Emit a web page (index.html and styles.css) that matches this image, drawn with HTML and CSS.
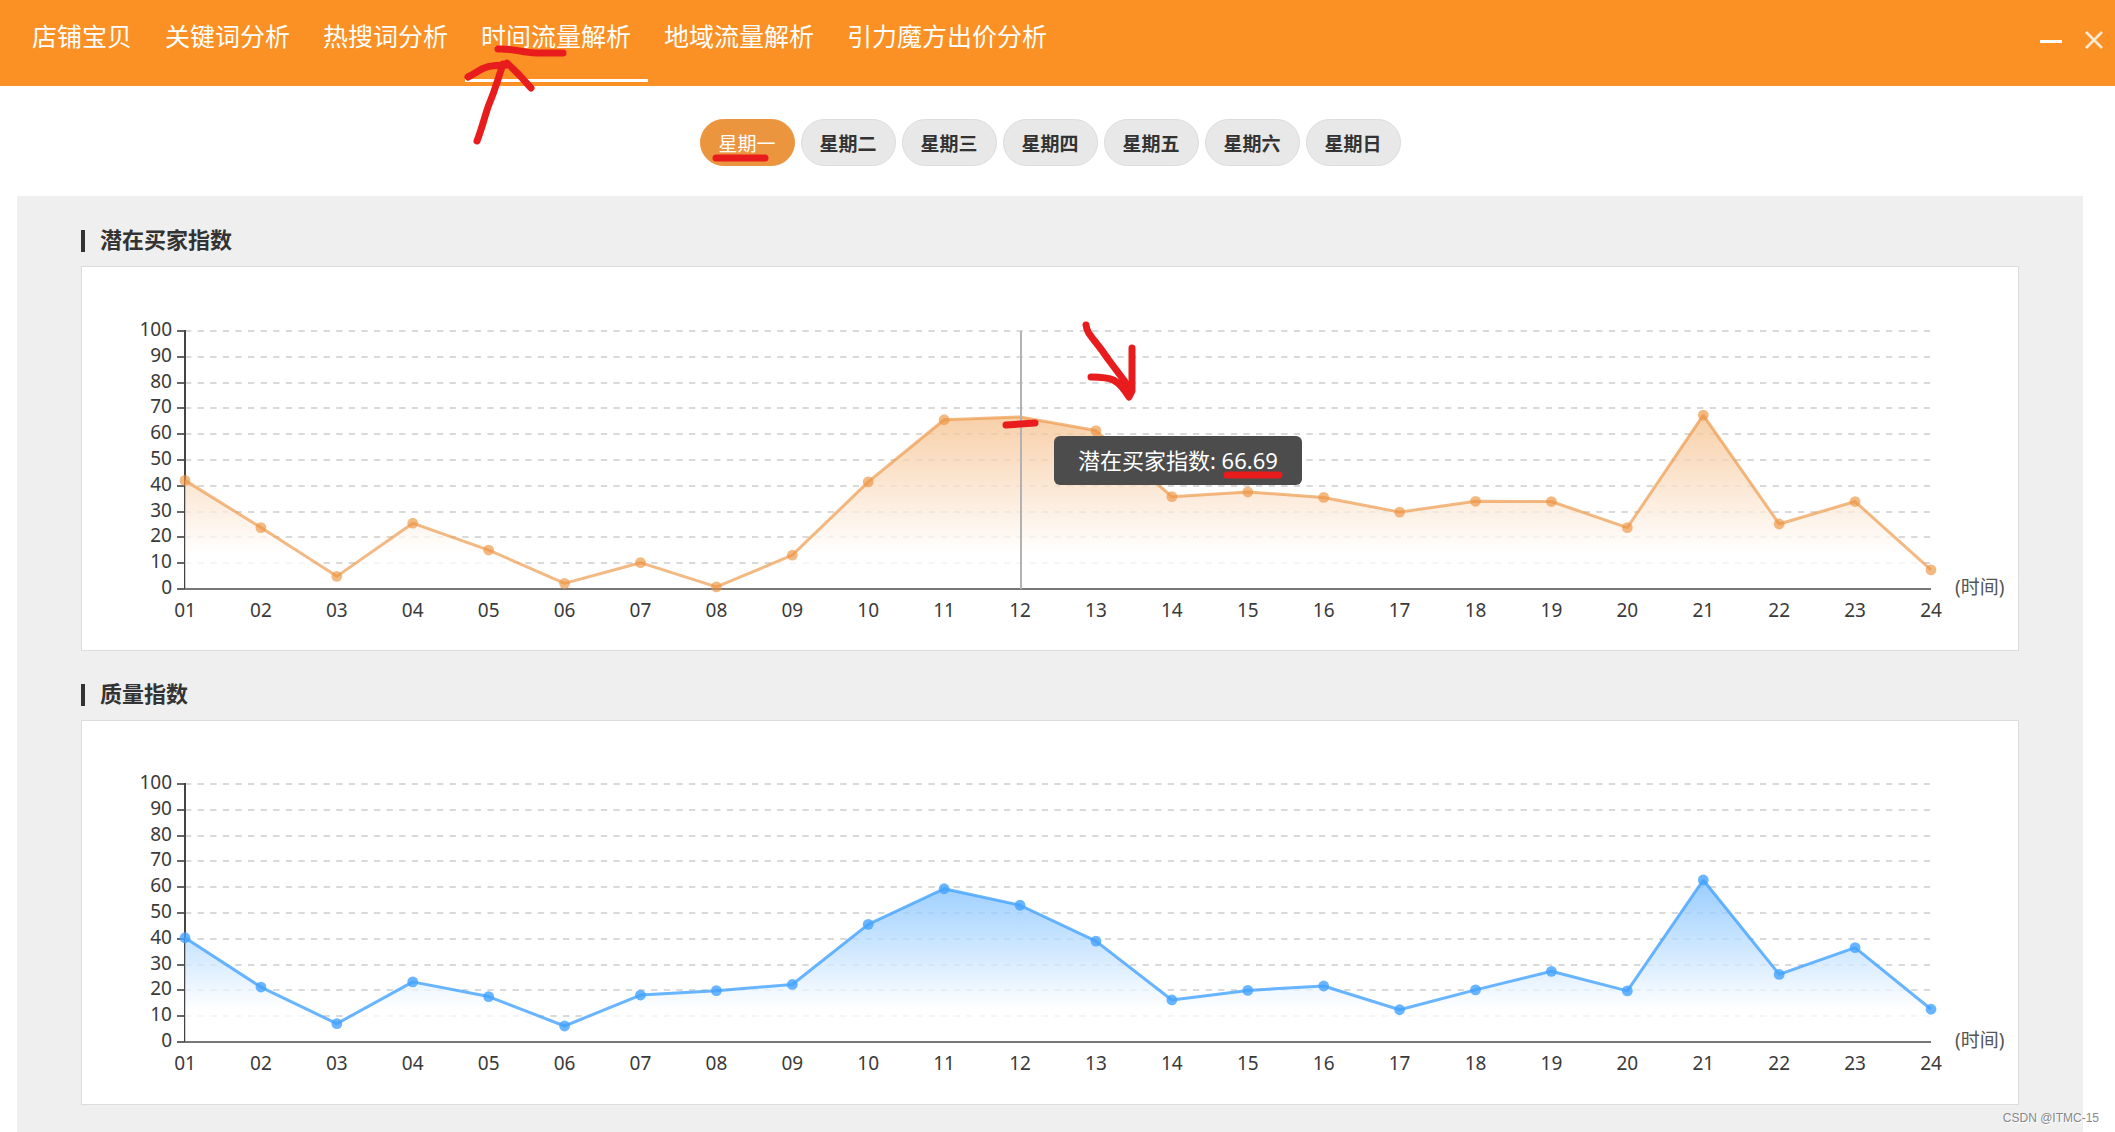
FILE: index.html
```html
<!DOCTYPE html>
<html lang="zh-CN">
<head>
<meta charset="utf-8">
<meta name="viewport" content="width=device-width, initial-scale=1">
<title>时间流量解析</title>
<link rel="stylesheet" href="styles.css">
</head>
<body>
<header class="topbar">
  <nav class="tabs">
    <a class="tab" href="#shop">店铺宝贝</a>
    <a class="tab" href="#keyword">关键词分析</a>
    <a class="tab" href="#hot">热搜词分析</a>
    <a class="tab tab-active" href="#time" aria-current="page">时间流量解析</a>
    <a class="tab" href="#region">地域流量解析</a>
    <a class="tab" href="#bid">引力魔方出价分析</a>
  </nav>
  <div class="window-controls">
    <button class="window-button" type="button" aria-label="最小化">
      <svg width="22" height="22" viewBox="0 0 22 22"><path d="M0 12.5h22" stroke="#fff" stroke-width="3"/></svg>
    </button>
    <button class="window-button" type="button" aria-label="关闭">
      <svg width="18" height="18" viewBox="0 0 18 18"><path d="M1 1l16 16M17 1L1 17" stroke="#ffe9d3" stroke-width="2.6"/></svg>
    </button>
  </div>
</header>

<main class="page">
  <div class="days">
    <button class="day day-active" type="button">星期一</button>
    <button class="day" type="button">星期二</button>
    <button class="day" type="button">星期三</button>
    <button class="day" type="button">星期四</button>
    <button class="day" type="button">星期五</button>
    <button class="day" type="button">星期六</button>
    <button class="day" type="button">星期日</button>
  </div>
  <div class="panels">
    <section>
      <h2 class="panel-title">潜在买家指数</h2>
      <div class="card">
        <svg class="chart" id="buyers"></svg>
        <div class="tooltip" id="tooltip">潜在买家指数: 66.69</div>
      </div>
    </section>
    <section>
      <h2 class="panel-title">质量指数</h2>
      <div class="card">
        <svg class="chart" id="quality"></svg>
      </div>
    </section>
  </div>
</main>

<svg class="marks" viewBox="0 0 2115 1132" preserveAspectRatio="xMinYMin meet" aria-hidden="true">
  <path d="M498 49C515 48 521 53 536 53H563"/>
  <path d="M477 141C482 128 484 119 488 107C496 88 497 82 503 64"/>
  <path d="M468 77C482 70 482 65 507 65L507 63C516 71 521 76 531 88"/>
  <path d="M716 158H765"/>
  <path d="M1006 425L1035 423"/>
  <path d="M1086 325C1087 335 1095 339 1108 359L1129 387"/>
  <path d="M1132 348V391L1129 397C1118 379 1112 377 1091 377"/>
  <path d="M1227 475H1279"/>
</svg>
<div class="watermark">CSDN @ITMC-15</div>
<script src="charts.js"></script>
</body>
</html>
```
FILE: styles.css
```css
* {
  box-sizing: border-box;
}

body {
  position: relative;
  display: flex;
  flex-direction: column;
  min-height: 100vh;
  margin: 0;
  background: #fff;
  color: #333;
  font-family: "Noto Sans", "Noto Sans CJK SC", sans-serif;
}

.topbar {
  display: flex;
  justify-content: space-between;
  height: 86px;
  padding: 0 12px 0 16px;
  background: #fb9124;
}

.tabs {
  display: flex;
}

.tab {
  height: 82px;
  padding: 0 17px 0 16px;
  border-bottom: 3px solid transparent;
  color: #fff;
  font-family: "Noto Sans CJK SC", sans-serif;
  font-size: 25px;
  line-height: 70px;
  text-decoration: none;
  white-space: nowrap;
}

.tab-active {
  border-bottom-color: #fff;
}

.window-controls {
  display: flex;
  align-items: center;
  gap: 23px;
  height: 80px;
}

.window-button {
  display: flex;
  padding: 0;
  border: 0;
  background: none;
}

.page {
  display: flex;
  flex: 1;
  flex-direction: column;
  margin: 0 32px 0 17px;
}

.days {
  display: flex;
  justify-content: center;
  gap: 6px;
  padding: 33px 0 30px;
}

.day {
  width: 95px;
  height: 47px;
  padding: 0;
  border: 1px solid #dcdcdc;
  border-radius: 24px;
  background: #e8e8e8;
  color: #333;
  font-family: "Noto Sans CJK SC", sans-serif;
  font-size: 19px;
  font-weight: 700;
  line-height: 28px;
}

.day-active {
  border-color: #ec953f;
  background: #ec953f;
  color: #fff;
  font-weight: 400;
}

.panels {
  flex: 1;
  padding: 1px 64px 27px;
  background: #efefef;
}

.panel-title {
  display: flex;
  align-items: flex-start;
  gap: 15px;
  margin: 0;
  padding: 33px 0 14px;
  font-family: "Noto Sans CJK SC", sans-serif;
  font-size: 22px;
  font-weight: 700;
  line-height: 17px;
}

.panel-title::before {
  width: 4px;
  height: 22px;
  background: #333;
  content: "";
}

.card {
  position: relative;
  border: 1px solid #dcdcdc;
  background: #fff;
}

.chart {
  display: block;
  width: 100%;
  height: 383px;
}

.chart text {
  fill: #3a3a3a;
  font-size: 19px;
}

.chart .axis-name {
  fill: #555;
}

.tooltip {
  position: absolute;
  top: 169px;
  height: 49px;
  padding: 0 24px;
  border-radius: 6px;
  background: #4c4c4c;
  color: #fff;
  font-size: 22px;
  line-height: 49px;
  white-space: nowrap;
}

.marks {
  position: absolute;
  top: 0;
  left: 0;
  width: 100%;
  fill: none;
  stroke: #e81c1c;
  stroke-width: 7;
  stroke-linecap: round;
  stroke-linejoin: round;
  pointer-events: none;
}

.watermark {
  position: absolute;
  right: 16px;
  bottom: 6px;
  color: #888;
  font-family: "Liberation Sans", sans-serif;
  font-size: 12px;
  line-height: 16px;
  text-shadow: 1px 1px 0 #fff;
}
```
FILE: charts.js
```js
const HEIGHT = 258;
const LEFT = 103;
const RIGHT = 87;

const charts = [
  {
    id: 'buyers', top: 64, line: '#ed9340', opacity: 0.65, area: '#f5bf8b', pointer: 11,
    data: [42.1, 23.8, 4.9, 25.5, 15.1, 2.2, 10.2, 0.8, 13.1, 41.5, 65.6, 66.69,
      61.4, 35.8, 37.6, 35.5, 29.8, 34, 33.9, 23.8, 67.4, 25.2, 33.9, 7.4]
  },
  {
    id: 'quality', top: 63, line: '#43a2ff', opacity: 0.8, area: '#77bcff', pointer: -1,
    data: [40.4, 21.3, 7.1, 23.3, 17.6, 6.2, 18.2, 19.9, 22.3, 45.6, 59.4, 53,
      39.1, 16.3, 20, 21.7, 12.5, 20.2, 27.4, 19.8, 62.8, 26.2, 36.6, 12.7]
  }
];

function draw(chart) {
  const svg = document.getElementById(chart.id);
  const base = chart.top + HEIGHT;
  const end = svg.getBoundingClientRect().width - RIGHT;
  const x = i => LEFT + (end - LEFT) * i / (chart.data.length - 1);
  const y = v => base - HEIGHT * v / 100;
  let out = '';

  // grid and value axis
  for (let v = 0; v <= 100; v += 10) {
    const gy = Math.round(y(v));
    if (v > 0) {
      out += `<path d="M${LEFT} ${gy}H${end}" stroke="#d9d9d9" stroke-width="2" stroke-dasharray="6.3 6.3"/>`;
    }
    out += `<path d="M${LEFT - 8} ${gy}h8" stroke="#666" stroke-width="2"/>`;
    out += `<text x="${LEFT - 13}" y="${gy + 5}" text-anchor="end">${v}</text>`;
  }
  out += `<path d="M${LEFT} ${chart.top - 1}V${base}" stroke="#444" stroke-width="2"/>`;

  // series
  const points = chart.data.map((v, i) => `${x(i)},${y(v)}`);
  out += `<linearGradient id="${chart.id}-fill" x1="0" y1="0" x2="0" y2="1">
    <stop offset="0" stop-color="${chart.area}"/><stop offset="0.8" stop-color="#fff"/></linearGradient>`;
  out += `<polygon points="${points.join(' ')} ${end},${base} ${LEFT},${base}" fill="url(#${chart.id}-fill)" opacity="0.75"/>`;
  out += `<path d="M${LEFT} ${base}H${end}" stroke="#777" stroke-width="2"/>`;
  out += `<polyline points="${points.join(' ')}" fill="none" stroke="${chart.line}" stroke-width="3" stroke-linejoin="bevel" opacity="${chart.opacity}"/>`;
  chart.data.forEach((v, i) => {
    if (i !== chart.pointer) {
      out += `<circle cx="${x(i)}" cy="${y(v)}" r="5.4" fill="${chart.line}" opacity="${chart.opacity}"/>`;
    }
    out += `<text x="${x(i)}" y="${base + 28}" text-anchor="middle">${String(i + 1).padStart(2, '0')}</text>`;
  });
  out += `<text class="axis-name" x="${end + 24}" y="${base + 5}">(时间)</text>`;

  if (chart.pointer >= 0) {
    const px = Math.ceil(x(chart.pointer));
    out += `<path d="M${px} ${chart.top}V${base}" stroke="#b2b2b2" stroke-width="2"/>`;
    document.getElementById('tooltip').style.left = `${px + 33}px`;
  }
  svg.innerHTML = out;
}

function drawAll() {
  charts.forEach(draw);
}

drawAll();
window.addEventListener('resize', drawAll);
```
